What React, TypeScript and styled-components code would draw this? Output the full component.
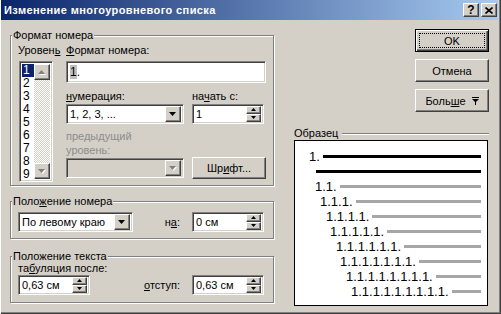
import React from 'react';
import styled, { createGlobalStyle, css } from 'styled-components';

const FACE = '#D4D0C8';

const Global = createGlobalStyle`
  html, body { margin: 0; padding: 0; background: ${FACE}; }
  body { font-family: "Liberation Sans", Arial, sans-serif; font-size: 11px; color: #000; }
  * { box-sizing: border-box; }
`;

const sunken = css`
  background: #fff;
  border: 1px solid;
  border-color: #808080 #fff #fff #808080;
  box-shadow: inset 1px 1px #404040, inset -1px -1px ${FACE};
`;

const raised = css`
  background: ${FACE};
  border: 1px solid;
  border-color: #fff #404040 #404040 #fff;
  box-shadow: inset -1px -1px #808080, inset 1px 1px ${FACE};
`;

const Window = styled.div`
  width: 501px;
  height: 314px;
  background: ${FACE};
  display: flex;
  flex-direction: column;
  padding: 0 3px 2px 1px;
  box-shadow: inset 1px 0 #fff, inset -1px -1px #404040, inset -2px -2px #808080;
  overflow: hidden;
`;

const TitleBar = styled.div`
  height: 20px;
  flex: none;
  display: flex;
  align-items: center;
  padding: 0 1px 0 3px;
  background: linear-gradient(to right, #0a246a, #a6caf0);
`;

const Title = styled.span`
  flex: 1;
  color: #fff;
  font-weight: bold;
  font-size: 11px;
  letter-spacing: 0.4px;
  white-space: nowrap;
`;

const CaptionButtons = styled.div`
  display: flex;
  gap: 2px;
`;

const CaptionButton = styled.div`
  ${raised};
  width: 16px;
  height: 14px;
  display: flex;
  align-items: center;
  justify-content: center;
  font-weight: bold;
  font-size: 12px;
  line-height: 12px;
`;

const Body = styled.div`
  flex: 1;
  display: flex;
  padding: 9px 0 0 9px;
`;

const LeftCol = styled.div`
  width: 264px;
  margin-top: 6px;
  display: flex;
  flex-direction: column;
`;

const Group = styled.div`
  position: relative;
  border: 1px solid #808080;
  box-shadow: inset 1px 1px #fff, 1px 1px #fff;
`;

const Legend = styled.span`
  position: absolute;
  top: -7px;
  left: 1px;
  padding: 0 1px;
  background: ${FACE};
  line-height: 13px;
  white-space: nowrap;
`;

const FormatGroup = styled(Group)`
  height: 151px;
  padding: 8px 0 0 7px;
  display: grid;
  grid-template-columns: 35px 200px;
  column-gap: 13px;
  align-items: start;
`;

const PositionGroup = styled(Group)`
  height: 38px;
  margin-top: 15px;
  padding: 10px 9px 0 7px;
  display: grid;
  grid-template-columns: 115px 1fr 72px;
  align-items: center;
  align-content: start;
`;

const TextGroup = styled(Group)`
  height: 47px;
  margin-top: 17px;
  padding: 5px 9px 0 7px;
  display: grid;
  grid-template-columns: 115px 1fr 72px;
  align-items: center;
  align-content: start;
`;

const Key = styled.span`
  text-decoration: underline;
  text-underline-offset: 1px;
`;

const FieldLabel = styled.div<{ $disabled?: boolean; $span?: boolean; $end?: boolean }>`
  line-height: 13px;
  white-space: nowrap;
  color: ${(p) => (p.$disabled ? '#8c8c8c' : '#000')};
  ${(p) => p.$span && 'grid-column: 1 / -1;'}
  ${(p) => p.$end && 'justify-self: end; margin-right: 12px;'}
`;

const PrevLabel = styled(FieldLabel)`
  grid-column: 1 / -1;
  margin-top: 6px;
  line-height: 13.5px;
  white-space: normal;
`;

const LevelCol = styled.div`
  display: flex;
  flex-direction: column;
`;

const LevelList = styled.div`
  ${sunken};
  margin: 4px 0 0 1px;
  width: 34px;
  height: 121px;
  padding: 2px;
  display: flex;
`;

const LevelItems = styled.div`
  flex: 1;
  display: flex;
  flex-direction: column;
`;

const LevelItem = styled.div<{ $selected?: boolean }>`
  height: 13px;
  line-height: 13px;
  padding-left: 1px;
  font-size: 12px;
  background: ${(p) => (p.$selected ? '#0a246a' : 'transparent')};
  color: ${(p) => (p.$selected ? '#fff' : '#000')};
`;

const ScrollBar = styled.div`
  width: 16px;
  display: flex;
  flex-direction: column;
`;

const ScrollTrack = styled.div`
  flex: 1;
  background-color: #fff;
  background-image: repeating-conic-gradient(${FACE} 0 25%, #fff 0 50%);
  background-size: 2px 2px;
`;

const ScrollButton = styled.div`
  ${raised};
  height: 16px;
  display: flex;
  align-items: center;
  justify-content: center;
`;

const FormatCol = styled.div`
  display: flex;
  flex-direction: column;
`;

const Edit = styled.div`
  ${sunken};
  margin-top: 4px;
  width: 200px;
  height: 22px;
  padding: 0 3px;
  display: flex;
  align-items: center;
  font-size: 12px;
`;

const Selected = styled.span`
  background: #bfbfbf;
`;

const NumberGrid = styled.div`
  margin-top: 7px;
  display: grid;
  grid-template-columns: 118px 74px;
  column-gap: 8px;
  align-items: center;
`;

const Combo = styled.div<{ $w: number; $disabled?: boolean; $top?: number }>`
  ${sunken};
  ${(p) => p.$disabled && `background: ${FACE};`}
  width: ${(p) => p.$w}px;
  height: 20px;
  margin-top: ${(p) => p.$top ?? 0}px;
  padding: 2px;
  display: flex;
  align-items: center;
`;

const FieldText = styled.span`
  flex: 1;
  padding-left: 1px;
  white-space: nowrap;
  overflow: hidden;
`;

const DropButton = styled.div`
  ${raised};
  width: 16px;
  height: 16px;
  display: flex;
  align-items: center;
  justify-content: center;
`;

const SpinButtons = styled.div`
  width: 15px;
  height: 16px;
  display: flex;
  flex-direction: column;
`;

const SpinButton = styled.div`
  ${raised};
  height: 8px;
  display: flex;
  align-items: center;
  justify-content: center;
`;

const PushButton = styled.div<{ $default?: boolean; $h?: number }>`
  ${raised};
  position: relative;
  width: 74px;
  height: ${(p) => p.$h ?? 23}px;
  display: flex;
  align-items: center;
  justify-content: center;
  gap: 6px;
  white-space: nowrap;
  ${(p) =>
    p.$default &&
    css`
      border: 1px solid #000;
      box-shadow: inset 1px 1px #fff, inset -1px -1px #404040, inset -2px -2px #808080;
      &::after {
        content: '';
        position: absolute;
        inset: 3px;
        border: 1px dotted #000;
      }
    `}
`;

const RightCol = styled.div`
  width: 195px;
  margin-left: 20px;
  display: flex;
  flex-direction: column;
`;

const ButtonStack = styled.div`
  align-self: flex-end;
  display: flex;
  flex-direction: column;
  gap: 7px;
`;

const SampleHeader = styled.div`
  margin-top: 15px;
  height: 13px;
  display: flex;
  align-items: center;
  line-height: 13px;
`;

const SampleRule = styled.div`
  flex: 1;
  margin-left: 4px;
  height: 2px;
  border-top: 1px solid #808080;
  border-bottom: 1px solid #fff;
`;

const SampleBox = styled.div`
  width: 194px;
  height: 166px;
  background: #fff;
  border: 1px solid #000;
  padding: 8px 6px 0 0;
  display: flex;
  flex-direction: column;
`;

const SampleRow = styled.div<{ $indent: number }>`
  height: 15px;
  display: flex;
  align-items: center;
  padding-left: ${(p) => p.$indent}px;
`;

const SampleNum = styled.span`
  font-size: 13px;
  line-height: 15px;
  margin-right: 3px;
  white-space: nowrap;
`;

const SampleLine = styled.div<{ $tone: 'black' | 'gray' }>`
  flex: 1;
  height: 3px;
  background: ${(p) => (p.$tone === 'black' ? '#000' : '#a6a6a6')};
`;

const Arrow = ({ dir, disabled, small }: { dir: 'up' | 'down'; disabled?: boolean; small?: boolean }) => {
  const w = small ? 5 : 7;
  const h = small ? 3 : 4;
  const pts = dir === 'down' ? `0,0 ${w},0 ${w / 2},${h}` : `0,${h} ${w},${h} ${w / 2},0`;
  const color = disabled ? '#808080' : '#000';
  return (
    <svg width={w + 1} height={h + 1} viewBox={`0 0 ${w + 1} ${h + 1}`}>
      {disabled && <polygon points={pts} fill="#fff" transform="translate(1,1)" />}
      <polygon points={pts} fill={color} />
    </svg>
  );
};

const MoreIcon = () => (
  <svg width="7" height="8" viewBox="0 0 7 8">
    <rect x="0" y="0" width="7" height="1" fill="#000" />
    <polygon points="0,2 7,2 3.5,5.5" fill="#000" />
    <rect x="3" y="5" width="1" height="3" fill="#000" />
  </svg>
);

const CloseIcon = () => (
  <svg width="8" height="7" viewBox="0 0 8 7">
    <path d="M0.5 0.5 L7.5 6.5 M7.5 0.5 L0.5 6.5" stroke="#000" strokeWidth="1.6" />
  </svg>
);

const ComboBox = ({ text, w, disabled, top }: { text: string; w: number; disabled?: boolean; top?: number }) => (
  <Combo $w={w} $disabled={disabled} $top={top}>
    <FieldText>{text}</FieldText>
    <DropButton>
      <Arrow dir="down" disabled={disabled} />
    </DropButton>
  </Combo>
);

const Spinner = ({ text, top }: { text: string; top?: number }) => (
  <Combo $w={72} $top={top}>
    <FieldText>{text}</FieldText>
    <SpinButtons>
      <SpinButton>
        <Arrow dir="up" small />
      </SpinButton>
      <SpinButton>
        <Arrow dir="down" small />
      </SpinButton>
    </SpinButtons>
  </Combo>
);

const sample: { num: string; indent: number; tone: 'black' | 'gray' }[] = [
  { num: '1.', indent: 14, tone: 'black' },
  { num: '', indent: 21, tone: 'black' },
  { num: '1.1.', indent: 20, tone: 'gray' },
  { num: '1.1.1.', indent: 25, tone: 'gray' },
  { num: '1.1.1.1.', indent: 31, tone: 'gray' },
  { num: '1.1.1.1.1.', indent: 35, tone: 'gray' },
  { num: '1.1.1.1.1.1.', indent: 41, tone: 'gray' },
  { num: '1.1.1.1.1.1.1.', indent: 45, tone: 'gray' },
  { num: '1.1.1.1.1.1.1.1.', indent: 51, tone: 'gray' },
  { num: '1.1.1.1.1.1.1.1.1.', indent: 56, tone: 'gray' },
];

export default function App() {
  return (
    <>
      <Global />
      <Window>
        <TitleBar>
          <Title>Изменение многоуровневого списка</Title>
          <CaptionButtons>
            <CaptionButton>?</CaptionButton>
            <CaptionButton>
              <CloseIcon />
            </CaptionButton>
          </CaptionButtons>
        </TitleBar>
        <Body>
          <LeftCol>
            <FormatGroup>
              <Legend>Формат номера</Legend>
              <LevelCol>
                <FieldLabel>
                  Уровен<Key>ь</Key>
                </FieldLabel>
                <LevelList>
                  <LevelItems>
                    {[1, 2, 3, 4, 5, 6, 7, 8, 9].map((n) => (
                      <LevelItem key={n} $selected={n === 1}>
                        {n}
                      </LevelItem>
                    ))}
                  </LevelItems>
                  <ScrollBar>
                    <ScrollButton>
                      <Arrow dir="up" disabled />
                    </ScrollButton>
                    <ScrollTrack />
                    <ScrollButton>
                      <Arrow dir="down" disabled />
                    </ScrollButton>
                  </ScrollBar>
                </LevelList>
              </LevelCol>
              <FormatCol>
                <FieldLabel>
                  <Key>Ф</Key>ормат номера:
                </FieldLabel>
                <Edit>
                  <Selected>1</Selected>.
                </Edit>
                <NumberGrid>
                  <FieldLabel>
                    <Key>н</Key>умерация:
                  </FieldLabel>
                  <FieldLabel>
                    на<Key>ч</Key>ать с:
                  </FieldLabel>
                  <ComboBox text="1, 2, 3, ..." w={118} top={1} />
                  <Spinner text="1" top={1} />
                  <PrevLabel $disabled>
                    предыдущий
                    <br />
                    уровень:
                  </PrevLabel>
                  <ComboBox text="" w={118} disabled />
                  <PushButton $h={22}>
                    <span>
                      Шр<Key>и</Key>фт...
                    </span>
                  </PushButton>
                </NumberGrid>
              </FormatCol>
            </FormatGroup>

            <PositionGroup>
              <Legend>
                Поло<Key>ж</Key>ение номера
              </Legend>
              <ComboBox text="По левому краю" w={115} />
              <FieldLabel $end>
                н<Key>а</Key>:
              </FieldLabel>
              <Spinner text="0 см" />
            </PositionGroup>

            <TextGroup>
              <Legend>Положение текста</Legend>
              <FieldLabel $span>
                та<Key>б</Key>уляция после:
              </FieldLabel>
              <Spinner text="0,63 см" />
              <FieldLabel $end>
                <Key>о</Key>тступ:
              </FieldLabel>
              <Spinner text="0,63 см" />
            </TextGroup>
          </LeftCol>

          <RightCol>
            <ButtonStack>
              <PushButton $default>OK</PushButton>
              <PushButton>Отмена</PushButton>
              <PushButton>
                <span>
                  Боль<Key>ш</Key>е
                </span>
                <MoreIcon />
              </PushButton>
            </ButtonStack>
            <SampleHeader>
              <span>Образец</span>
              <SampleRule />
            </SampleHeader>
            <SampleBox>
              {sample.map((r, i) => (
                <SampleRow key={i} $indent={r.indent}>
                  {r.num && <SampleNum>{r.num}</SampleNum>}
                  <SampleLine $tone={r.tone} />
                </SampleRow>
              ))}
            </SampleBox>
          </RightCol>
        </Body>
      </Window>
    </>
  );
}
